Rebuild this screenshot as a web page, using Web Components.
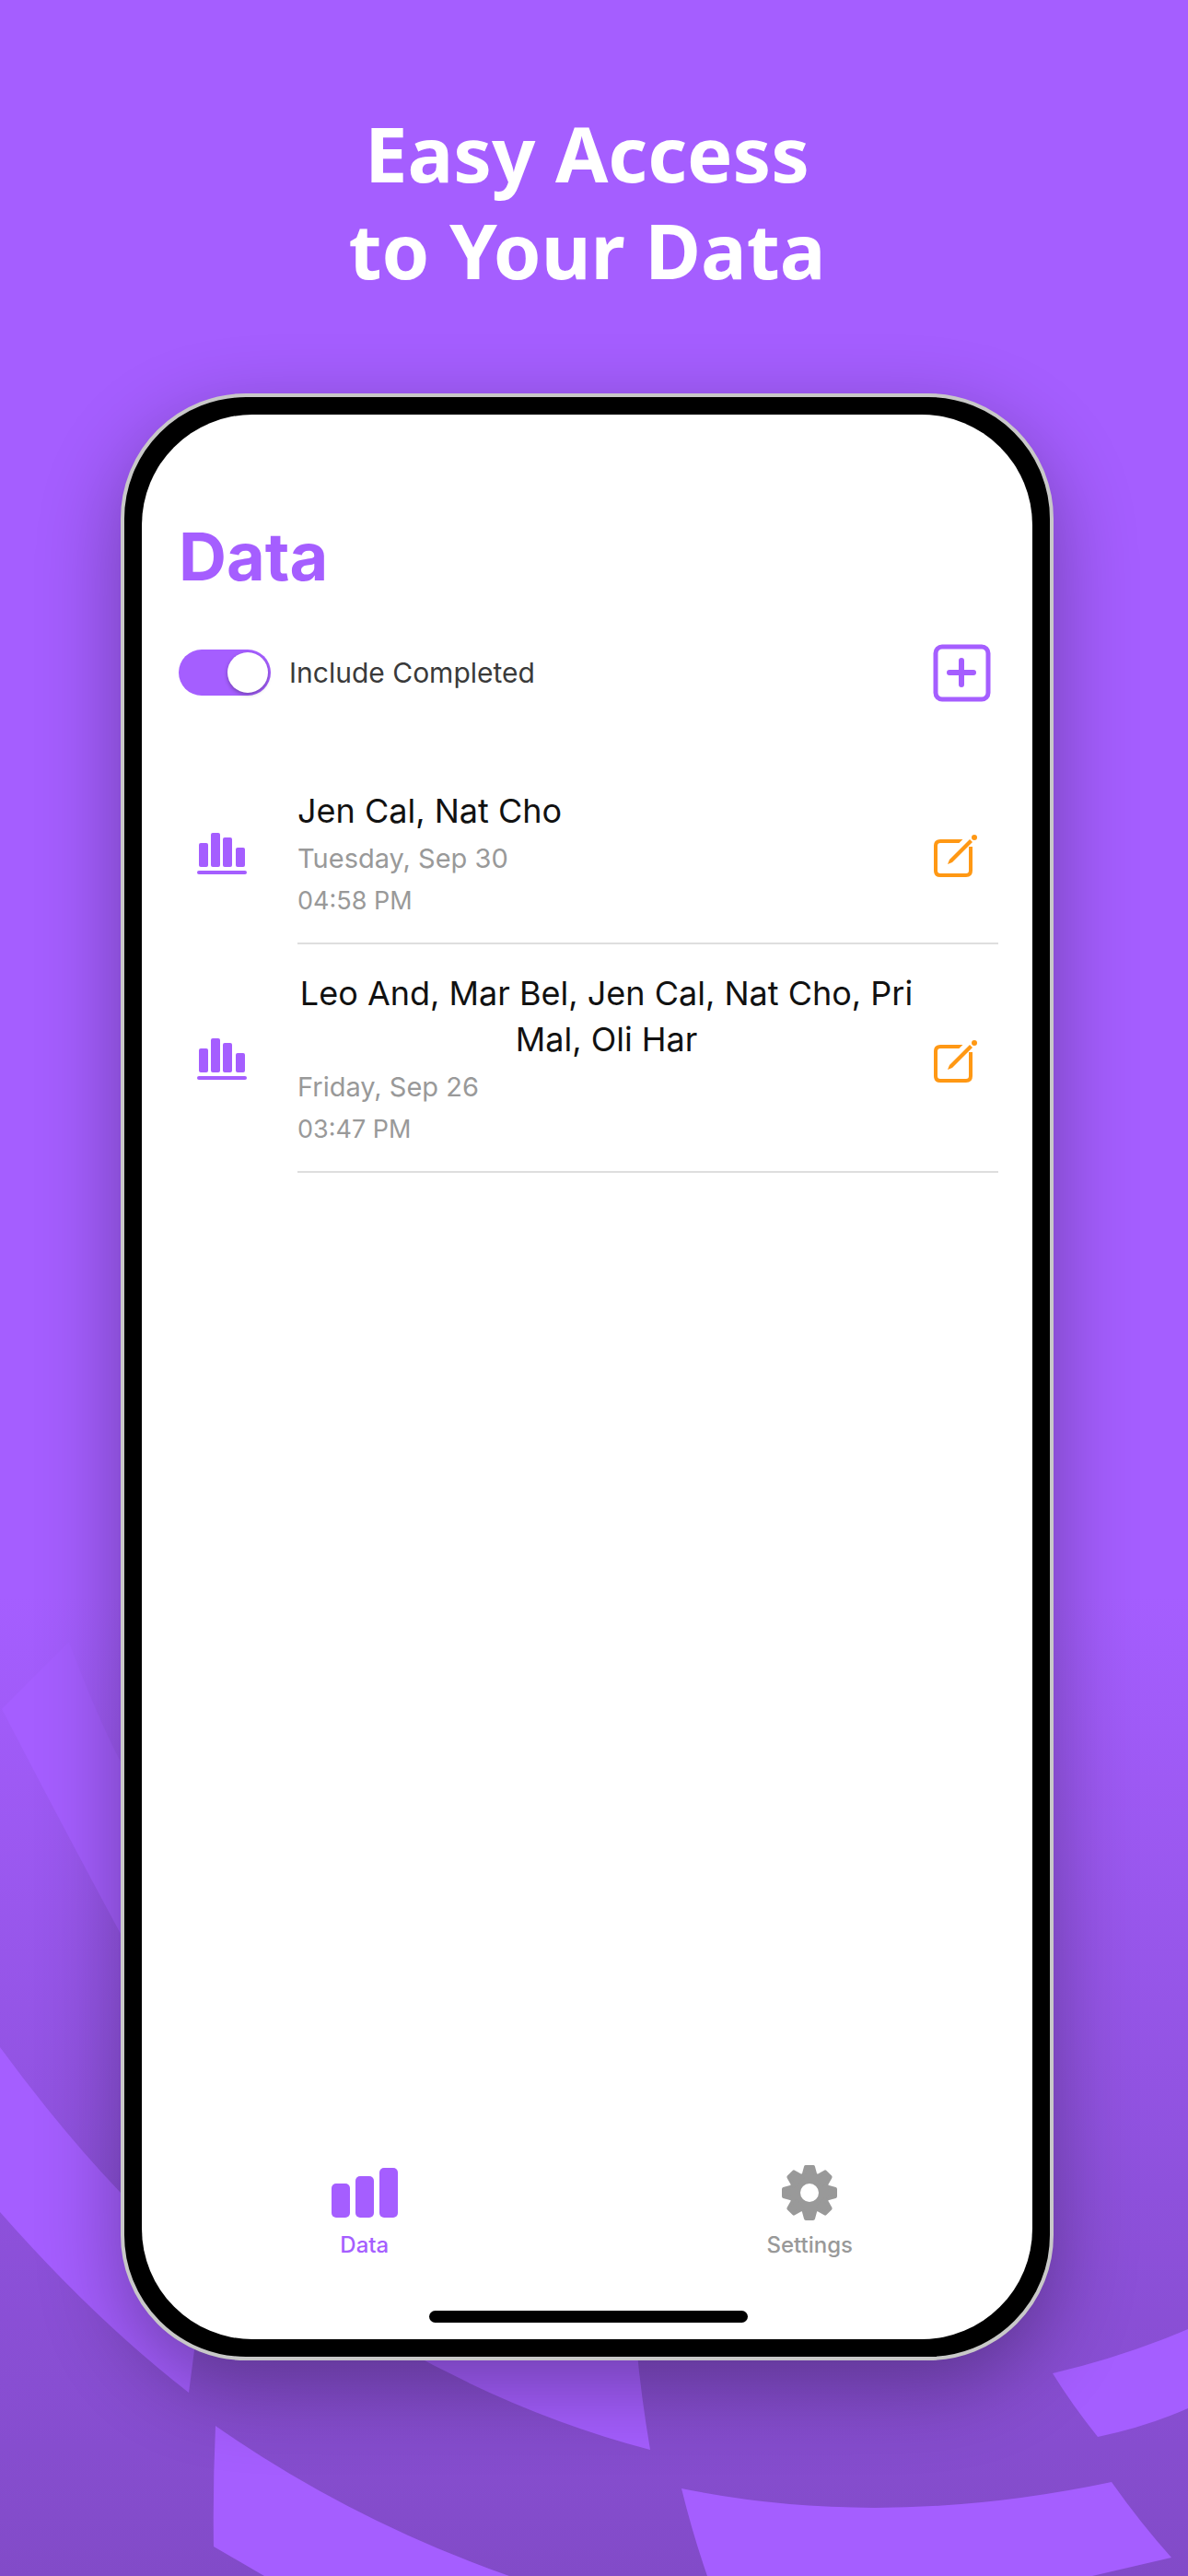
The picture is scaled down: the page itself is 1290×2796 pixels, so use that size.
<!DOCTYPE html>
<html lang="en">
<head>
<meta charset="utf-8">
<meta name="viewport" content="width=device-width, initial-scale=1">
<title>Easy Access to Your Data</title>
<style>
    body {
        margin: 0;
        --brand: #a55eff;
        --muted: #999;
        --edit: #ff9814;
        font-family: Inter, "Liberation Sans", sans-serif;
    }
</style>
</head>
<body>
<promo-page>
    <span slot="headline">Easy Access<br>to Your Data</span>
    <phone-frame>
        <data-header heading="Data" toggle-label="Include Completed"></data-header>
        <data-list>
            <data-row date="Tuesday, Sep 30" time="04:58 PM">Jen Cal, Nat Cho</data-row>
            <data-row date="Friday, Sep 26" time="03:47 PM">Leo And, Mar Bel, Jen Cal, Nat Cho, Pri Mal, Oli Har</data-row>
        </data-list>
        <tab-bar slot="footer">
            <tab-item label="Data" href="#data" active>
                <svg width="74" height="60" viewBox="0 0 74 60" fill="currentColor" aria-hidden="true">
                    <rect x="1" y="20" width="20" height="37" rx="5"/>
                    <rect x="27" y="12" width="20" height="45" rx="5"/>
                    <rect x="53" y="3" width="20" height="54" rx="5"/>
                </svg>
            </tab-item>
            <tab-item label="Settings" href="#settings">
                <svg width="60" height="60" viewBox="-30 -30 60 60" fill="currentColor" stroke="currentColor" stroke-linejoin="round" aria-hidden="true">
                    <circle r="16" fill="none" stroke-width="12"/>
                    <g stroke-width="4">
                        <path d="M-7 -17 -4 -28H4L7 -17z"/>
                        <path d="M-7 -17 -4 -28H4L7 -17z" transform="rotate(45)"/>
                        <path d="M-7 -17 -4 -28H4L7 -17z" transform="rotate(90)"/>
                        <path d="M-7 -17 -4 -28H4L7 -17z" transform="rotate(135)"/>
                        <path d="M-7 -17 -4 -28H4L7 -17z" transform="rotate(180)"/>
                        <path d="M-7 -17 -4 -28H4L7 -17z" transform="rotate(225)"/>
                        <path d="M-7 -17 -4 -28H4L7 -17z" transform="rotate(270)"/>
                        <path d="M-7 -17 -4 -28H4L7 -17z" transform="rotate(315)"/>
                    </g>
                </svg>
            </tab-item>
        </tab-bar>
    </phone-frame>
</promo-page>

<script>
// parses the markup once per element class
function makeTemplate(html) {
    const template = document.createElement('template');
    template.innerHTML = html;
    return template;
}

class BaseElement extends HTMLElement {
    constructor() {
        super();
        this.attachShadow({ mode: 'open' });
        this.shadowRoot.appendChild(this.constructor.template.content.cloneNode(true));
    }
}

class PromoPage extends BaseElement {
    static template = makeTemplate(`
        <style>
            :host {
                display: flex;
                flex-direction: column;
                position: relative;
                box-sizing: border-box;
                min-height: 100vh;
                padding: 113px 146px 234px 131px;
                overflow: hidden;
                background: linear-gradient(var(--brand) 62%, #8e51dc 85%, #824bc8);
            }
            .backdrop {
                position: absolute;
                inset: 0;
                width: 100%;
                height: 100%;
                fill: var(--brand);
            }
            h1, ::slotted(phone-frame) {
                position: relative;
            }
            h1 {
                margin: 0 0 104px;
                color: #fff;
                font: 700 83px/105px "Noto Sans", "Open Sans", sans-serif;
                text-align: center;
            }
            ::slotted(phone-frame) {
                flex: 1;
            }
        </style>
        <svg class="backdrop" viewBox="0 0 1290 2796" preserveAspectRatio="xMidYMax slice" aria-hidden="true">
            <path d="M2 1855 75 1782Q106 1865 131 1912L160 1970V2150L131 2099Q62 1971 2 1855z"/>
            <path d="M0 2222Q66 2312 131 2380L240 2440 211 2551 205 2597Q102 2517 0 2401z"/>
            <path d="M234 2633Q380 2735 553 2796H287L232 2764Q231 2700 234 2633z"/>
            <path d="M430 2545Q565 2622 706 2659 696 2600 691 2545z"/>
            <path d="M740 2701Q960 2746 1207 2694 1238 2738 1272 2776L1186 2796H768Q752 2750 740 2701z"/>
            <path d="M1143 2576Q1220 2558 1290 2528V2614Q1245 2634 1192 2645 1164 2610 1143 2576z"/>
        </svg>
        <h1><slot name="headline"></slot></h1>
        <slot></slot>
    `);
}

class PhoneFrame extends BaseElement {
    static template = makeTemplate(`
        <style>
            :host {
                display: flex;
                box-sizing: border-box;
                border: 4px solid #c8c8c8;
                border-radius: 136px;
                background: #000;
                padding: 19px;
                box-shadow: 0 30px 90px rgba(0, 0, 0, .32);
            }
            .screen {
                flex: 1;
                display: flex;
                flex-direction: column;
                padding: 110px 37px 18px 40px;
                border-radius: 120px;
                background: #fff;
            }
            .content {
                flex: 1;
            }
            .home-indicator {
                align-self: center;
                width: 346px;
                height: 13px;
                border-radius: 7px;
                background: #000;
            }
        </style>
        <div class="screen">
            <div class="content"><slot></slot></div>
            <slot name="footer"></slot>
            <div class="home-indicator"></div>
        </div>
    `);
}

class DataHeader extends BaseElement {
    static template = makeTemplate(`
        <style>
            :host {
                display: block;
            }
            h2 {
                margin: 0 0 50px;
                color: var(--brand);
                font-size: 72px;
                font-weight: 700;
                line-height: 88px;
            }
            .toolbar {
                display: flex;
                align-items: center;
                justify-content: space-between;
                padding-right: 8px;
            }
            label {
                display: flex;
                align-items: center;
                gap: 20px;
                color: #3a3a3a;
                font-size: 30px;
            }
            input {
                appearance: none;
                display: flex;
                align-items: center;
                box-sizing: border-box;
                width: 100px;
                height: 50px;
                margin: 0;
                padding: 3px;
                border-radius: 25px;
                background: #ccc;
            }
            input::before {
                content: "";
                width: 44px;
                height: 44px;
                border-radius: 50%;
                background: #fff;
                box-shadow: 0 2px 4px rgba(0, 0, 0, .3);
            }
            input:checked {
                justify-content: flex-end;
                background: var(--brand);
            }
            button {
                display: block;
                padding: 0;
                border: 0;
                background: none;
                color: var(--brand);
            }
            svg {
                display: block;
            }
        </style>
        <h2></h2>
        <div class="toolbar">
            <label><input type="checkbox" role="switch" checked><span></span></label>
            <button type="button" aria-label="Add">
                <svg width="64" height="64" viewBox="0 0 64 64" fill="none" stroke="currentColor" stroke-linecap="round">
                    <rect x="4" y="4" width="57" height="57" rx="7" stroke-width="5"/>
                    <path d="M32 19V45M19 32H45" stroke-width="6"/>
                </svg>
            </button>
        </div>
    `);

    connectedCallback() {
        this.shadowRoot.querySelector('h2').textContent = this.getAttribute('heading');
        this.shadowRoot.querySelector('label span').textContent = this.getAttribute('toggle-label');
    }
}

class DataList extends BaseElement {
    static template = makeTemplate(`
        <style>
            :host {
                display: flex;
                flex-direction: column;
                margin-top: 65px;
            }
        </style>
        <slot></slot>
    `);

    connectedCallback() {
        this.setAttribute('role', 'list');
    }
}

class DataRow extends BaseElement {
    static template = makeTemplate(`
        <style>
            :host {
                display: flex;
                align-items: center;
                gap: 54px;
                padding-left: 19px;
            }
            .chart {
                flex: none;
                color: var(--brand);
            }
            .body {
                flex: 1;
                display: flex;
                align-items: center;
                justify-content: space-between;
                gap: 16px;
                padding: 28px 22px 22px 0;
                border-bottom: 2px solid #dedede;
            }
            .text {
                display: flex;
                flex-direction: column;
                align-items: flex-start;
                color: var(--muted);
                line-height: 46px;
            }
            .names {
                margin-bottom: 4px;
                color: #111;
                font-size: 36px;
                line-height: 50px;
                text-align: center;
            }
            .date {
                font-size: 29px;
            }
            .time {
                font-size: 27px;
            }
            button {
                flex: none;
                padding: 0;
                border: 0;
                background: none;
                color: var(--edit);
            }
            svg {
                display: block;
            }
        </style>
        <svg class="chart" width="56" height="48" viewBox="0 0 56 48" fill="currentColor" aria-hidden="true">
            <rect x="3" y="13" width="10" height="26" rx="2"/>
            <rect x="16" y="2" width="10" height="37" rx="2"/>
            <rect x="29" y="7" width="10" height="32" rx="2"/>
            <rect x="43" y="18" width="10" height="21" rx="2"/>
            <rect x="1" y="43" width="54" height="4" rx="2"/>
        </svg>
        <div class="body">
            <div class="text">
                <span class="names"><slot></slot></span>
                <time class="date"></time>
                <time class="time"></time>
            </div>
            <button type="button" aria-label="Edit">
                <svg width="52" height="52" viewBox="0 -2 52 52" fill="none" stroke="currentColor" stroke-width="4">
                    <path d="M37 9H11Q6 9 6 14V41Q6 46 11 46H39Q44 46 44 41V15"/>
                    <path d="M32 16 42 6" stroke="#fff" stroke-width="8"/>
                    <path d="M19 34 21 29 43 7 46 10 24 32z" fill="currentColor" stroke="none"/>
                    <circle cx="48" cy="5" r="3" fill="currentColor" stroke="none"/>
                </svg>
            </button>
        </div>
    `);

    connectedCallback() {
        this.setAttribute('role', 'listitem');
        this.shadowRoot.querySelector('.date').textContent = this.getAttribute('date');
        this.shadowRoot.querySelector('.time').textContent = this.getAttribute('time');
    }
}

class TabBar extends BaseElement {
    static template = makeTemplate(`
        <style>
            :host {
                display: block;
                margin: 0 -37px 56px -40px;
            }
            nav {
                display: flex;
            }
        </style>
        <nav><slot></slot></nav>
    `);
}

class TabItem extends BaseElement {
    static template = makeTemplate(`
        <style>
            :host {
                flex: 1;
                display: block;
            }
            a {
                display: flex;
                flex-direction: column;
                align-items: center;
                gap: 12px;
                color: var(--muted);
                font-size: 24px;
                font-weight: 500;
                line-height: 30px;
                text-decoration: none;
            }
            :host([active]) a {
                color: var(--brand);
            }
        </style>
        <a><slot></slot><span></span></a>
    `);

    connectedCallback() {
        const link = this.shadowRoot.querySelector('a');
        link.href = this.getAttribute('href');
        if (this.hasAttribute('active')) {
            link.setAttribute('aria-current', 'page');
        }
        this.shadowRoot.querySelector('span').textContent = this.getAttribute('label');
    }
}

customElements.define('promo-page', PromoPage);
customElements.define('phone-frame', PhoneFrame);
customElements.define('data-header', DataHeader);
customElements.define('data-list', DataList);
customElements.define('data-row', DataRow);
customElements.define('tab-bar', TabBar);
customElements.define('tab-item', TabItem);
</script>
</body>
</html>
